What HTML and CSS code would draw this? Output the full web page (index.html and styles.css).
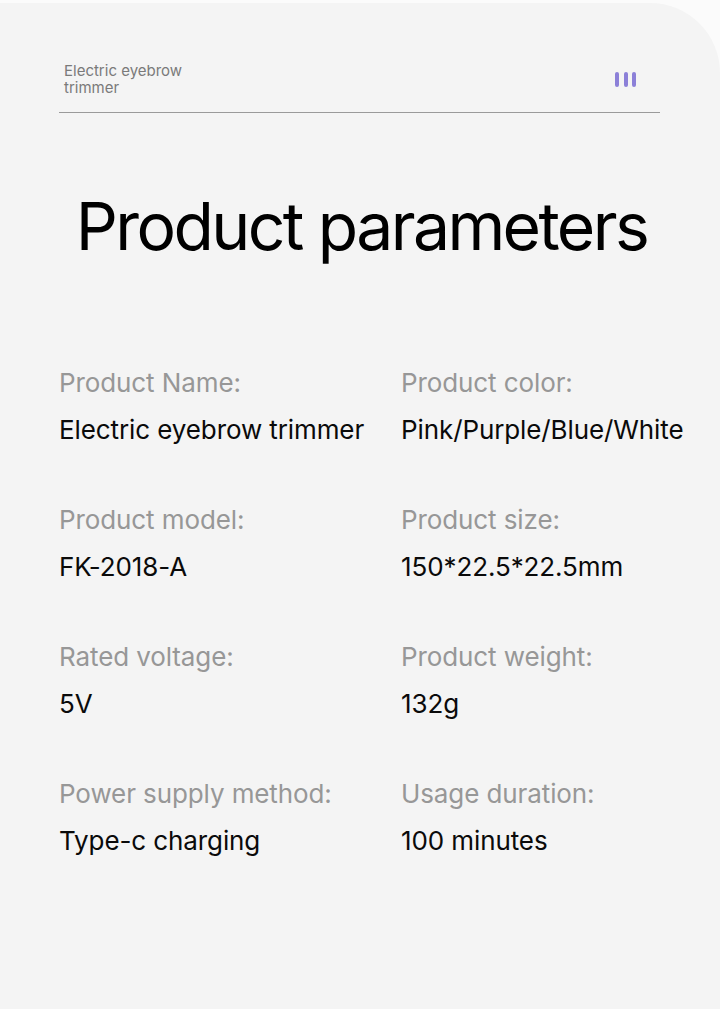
FILE: index.html
```html
<!DOCTYPE html>
<html>
<head>
<meta charset="utf-8">
<link rel="stylesheet" href="styles.css">
</head>
<body>
<div class="card">
  <header class="top">
    <div class="brand">Electric eyebrow<br>trimmer</div>
    <div class="bars"><span></span><span></span><span></span></div>
  </header>
  <h1 class="title">Product parameters</h1>
  <div class="grid">
    <div class="item"><div class="label">Product Name:</div><div class="value">Electric eyebrow trimmer</div></div>
    <div class="item"><div class="label">Product color:</div><div class="value">Pink/Purple/Blue/White</div></div>
    <div class="item"><div class="label">Product model:</div><div class="value">FK-2018-A</div></div>
    <div class="item"><div class="label">Product size:</div><div class="value">150*22.5*22.5mm</div></div>
    <div class="item"><div class="label">Rated voltage:</div><div class="value">5V</div></div>
    <div class="item"><div class="label">Product weight:</div><div class="value">132g</div></div>
    <div class="item"><div class="label">Power supply method:</div><div class="value">Type-c charging</div></div>
    <div class="item"><div class="label">Usage duration:</div><div class="value">100 minutes</div></div>
  </div>
</div>
</body>
</html>
```
FILE: styles.css
```css
html, body { margin: 0; padding: 0; }
body {
  background: #fbfbfb;
  font-family: "Inter", "Noto Sans", sans-serif;
  width: 720px;
  height: 1009px;
  overflow: hidden;
}
.card {
  margin-top: 3px;
  height: 1006px;
  background: #f4f4f4;
  border-top-right-radius: 70px;
  box-sizing: border-box;
  padding: 0 60px 0 59px;
}
.top {
  display: flex;
  justify-content: space-between;
  align-items: flex-start;
  padding: 59px 24px 0 5px;
  height: 50px;
  border-bottom: 1px solid #9a9a9a;
}
.brand {
  font-size: 15px;
  line-height: 17px;
  color: #7a7a7a;
}
.bars {
  display: flex;
  gap: 4.5px;
  margin-top: 10px;
}
.bars span {
  width: 4px;
  height: 15px;
  border-radius: 2px;
  background: #8c80d8;
}
.title {
  margin: 73px 0 0 0;
  text-align: center;
  white-space: nowrap;
  font-weight: 400;
  font-size: 66px;
  line-height: 80px;
  color: #000;
  letter-spacing: -2.6px;
  padding-left: 4px;
}
.grid {
  margin-top: 97px;
  display: grid;
  grid-template-columns: 342px 1fr;
  row-gap: 50px;
}
.label {
  font-size: 26px;
  line-height: 40px;
  color: #979797;
  letter-spacing: -0.1px;
}
.value {
  margin-top: 7px;
  font-size: 26px;
  line-height: 40px;
  color: #0a0a0a;
  letter-spacing: -0.1px;
}
```
